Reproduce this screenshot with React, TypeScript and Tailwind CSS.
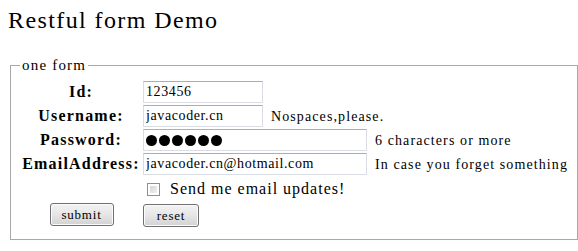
const serif = "font-['Liberation_Serif',serif]";

function Label({ children }: { children: string }) {
  return (
    <label className="flex h-[22px] items-center justify-center text-[16px] font-bold tracking-[1.2px] text-black">
      {children}
    </label>
  );
}

function Hint({ children }: { children: string }) {
  return <span className="ml-[8px] text-[14px] tracking-[1.1px] text-black">{children}</span>;
}

const box =
  "h-[22px] border border-[#d9dde3] border-t-[#abadb3] bg-white pl-[2px] text-[14px] tracking-[0.6px] text-black outline-none";

const button =
  "h-[23px] rounded-[3px] border border-[#707070] bg-linear-to-b from-[#f3f3f3] via-[#e6e6e6] to-[#d2d2d2] text-[13px] tracking-[0.8px] text-black shadow-[inset_0_0_0_1px_#fbfbfb]";

export default function App() {
  return (
    <div className={`h-[251px] w-[578px] bg-white ${serif}`}>
      <h1 className="pl-[8px] pt-[4px] text-[24px] leading-[32px] font-normal tracking-[1.4px] text-black">
        Restful form Demo
      </h1>
      <form className="mt-[21px]">
        <fieldset className="ml-[10px] w-[568px] border border-[#a8a8a8] pb-[12px]">
          <legend className="ml-[9px] px-[2px] text-[15px] leading-[16px] tracking-[1.2px] text-black">
            one form
          </legend>
          <div className="mt-[8px] grid grid-cols-[120px_1fr] gap-x-[2px] gap-y-[2px] pl-[10px]">
            <Label>Id:</Label>
            <div className="flex items-center">
              <input className={`${box} ${serif} w-[120px]`} defaultValue="123456" />
            </div>

            <Label>Username:</Label>
            <div className="flex items-center">
              <input className={`${box} ${serif} w-[120px]`} defaultValue="javacoder.cn" />
              <Hint>Nospaces,please.</Hint>
            </div>

            <Label>Password:</Label>
            <div className="flex items-center">
              <div className={`${box} flex w-[224px] items-center gap-[2px] pl-[1px]`}>
                {[0, 1, 2, 3, 4, 5].map((i) => (
                  <span key={i} className="h-[11px] w-[11px] rounded-full bg-black" />
                ))}
              </div>
              <Hint>6 characters or more</Hint>
            </div>

            <Label>EmailAddress:</Label>
            <div className="flex items-center">
              <input className={`${box} ${serif} w-[224px]`} defaultValue="javacoder.cn@hotmail.com" />
              <Hint>In case you forget something</Hint>
            </div>

            <div className="mt-[2px]" />
            <label className="mt-[2px] flex h-[20px] items-center gap-[10px] pl-[4px]">
              <input
                type="checkbox"
                className="h-[13px] w-[13px] appearance-none border border-[#8e8f8f] bg-linear-to-br from-[#d0d0d0] to-[#f6f6f6] shadow-[inset_0_0_0_2px_#ffffff]"
              />
              <span className="text-[16px] tracking-[1px] text-black">Send me email updates!</span>
            </label>

            <div className="mt-[2px] flex justify-center">
              <button type="submit" className={`${button} ${serif} ml-[1px] w-[64px]`}>
                submit
              </button>
            </div>
            <div className="mt-[2px]">
              <button type="reset" className={`${button} ${serif} w-[56px]`}>
                reset
              </button>
            </div>
          </div>
        </fieldset>
      </form>
    </div>
  );
}
